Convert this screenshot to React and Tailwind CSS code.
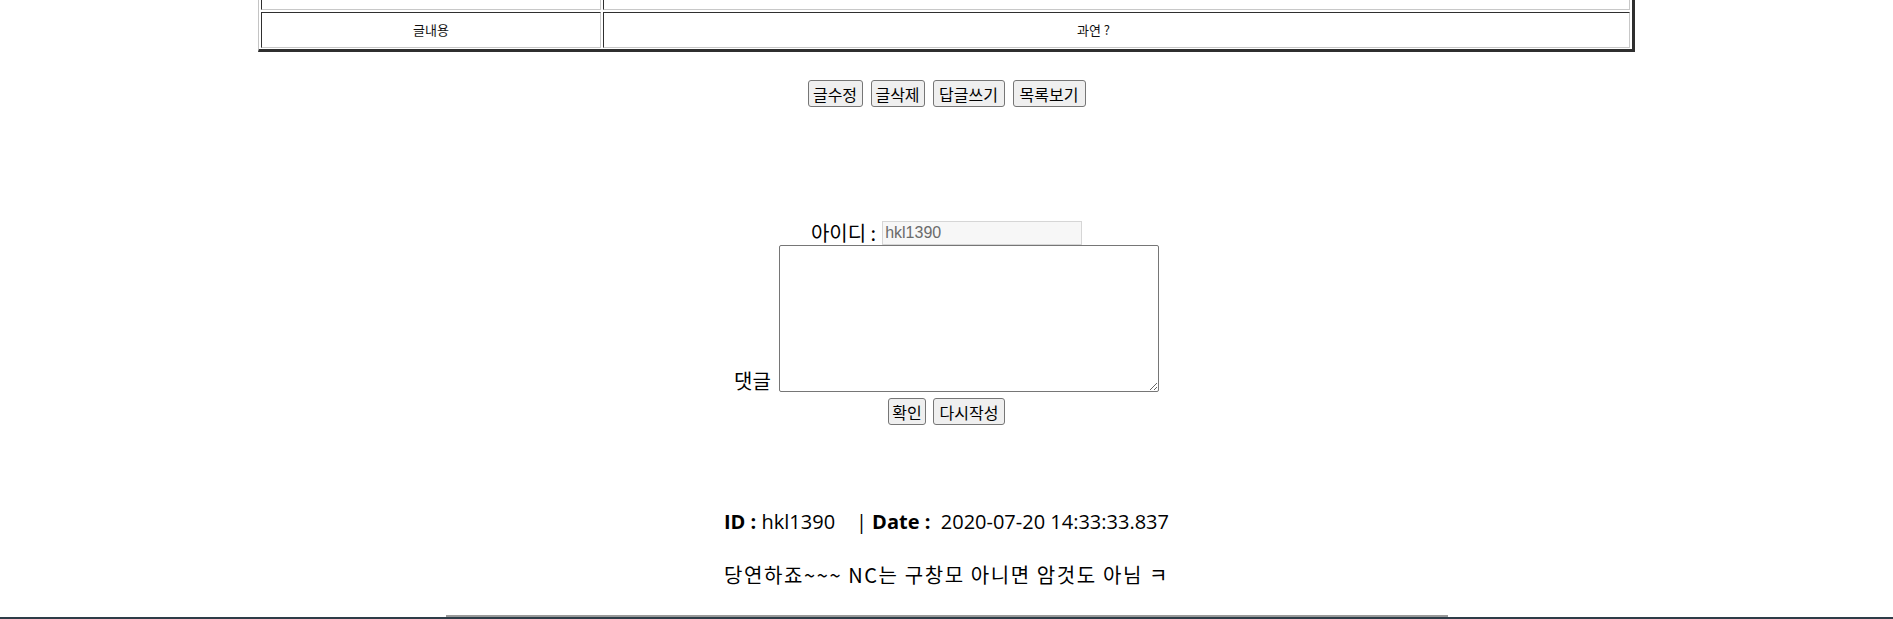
import React from "react";

const kr = { fontFamily: '"Noto Sans CJK KR", "Noto Sans", sans-serif' };

function Btn({ children, w }) {
  return (
    <button
      type="button"
      className={`h-[27px] ${w} border border-[#767676] rounded-[3px] bg-[#efefef] text-[16px] leading-none text-black px-[2px]`}
      style={kr}
    >
      {children}
    </button>
  );
}

function App() {
  return (
    <div className="bg-white w-[1893px] h-[619px] overflow-hidden flex flex-col" style={kr}>
      {/* board table, top rows scrolled out of view */}
      <div className="mx-auto -mt-[32px] w-[1377px] border-l border-l-[#c4c4c4] border-r-[3px] border-r-[#2f2f2f] border-b-[3px] border-b-[#2f2f2f] pt-[2px] pl-[2px] pr-[2px] pb-[1px] flex flex-col gap-[2px]">
        <div className="flex gap-[2px]">
          <div className="w-[340px] h-[40px] border border-t-[#2f2f2f] border-l-[#2f2f2f] border-b-[#c8c8c8] border-r-[#c8c8c8]" />
          <div className="flex-1 h-[40px] border border-t-[#2f2f2f] border-l-[#2f2f2f] border-b-[#c8c8c8] border-r-[#c8c8c8]" />
        </div>
        <div className="flex gap-[2px] text-[13px] text-[#111]">
          <div className="w-[340px] h-[36px] flex items-center justify-center border border-t-[#2f2f2f] border-l-[#2f2f2f] border-b-[#c8c8c8] border-r-[#c8c8c8]">
            글내용
          </div>
          <div className="flex-1 h-[36px] flex items-center justify-center pr-[46px] border border-t-[#2f2f2f] border-l-[#2f2f2f] border-b-[#c8c8c8] border-r-[#c8c8c8]">
            과연 ?
          </div>
        </div>
      </div>

      {/* post actions */}
      <div className="mt-[28px] flex justify-center gap-[8px]">
        <Btn w="w-[55px]">글수정</Btn>
        <Btn w="w-[54px]">글삭제</Btn>
        <Btn w="w-[72px]">답글쓰기</Btn>
        <Btn w="w-[73px]">목록보기</Btn>
      </div>

      {/* comment form */}
      <div className="mt-[114px] flex flex-col items-center">
        <div className="flex items-center gap-[6px] h-[24px]">
          <span className="text-[20px] leading-none text-black">아이디 :</span>
          <input
            readOnly
            value="hkl1390"
            className="w-[200px] h-[24px] bg-[#f7f7f7] border border-[#d6d6d6] px-[2px] text-[16px] text-[#6b6b6b] outline-none"
            style={{ fontFamily: '"Liberation Sans", Arial, sans-serif' }}
          />
        </div>
        <div className="flex items-end gap-[8px]">
          <span className="text-[20px] leading-none text-black mb-[1px]">댓글</span>
          <textarea className="w-[380px] h-[147px] border border-[#767676] rounded-[2px] resize-y" />
        </div>
        <div className="mt-[6px] flex gap-[7px]">
          <Btn w="w-[38px]">확인</Btn>
          <Btn w="w-[72px]">다시작성</Btn>
        </div>
      </div>

      {/* comment list */}
      <div
        className="mt-[82px] flex justify-center text-[20px] text-black whitespace-pre"
        style={{ fontFamily: '"Open Sans", "Noto Sans CJK KR", sans-serif' }}
      >
        <b>ID : </b>
        <span>hkl1390    </span>
        <span>| </span>
        <b>Date : </b>
        <span> 2020-07-20 14:33:33.837</span>
      </div>
      <div className="mt-[23px] flex justify-center text-[20px] tracking-[1.6px] text-black">
        당연하죠~~~ NC는 구창모 아니면 암것도 아님 ㅋ
      </div>

      <div className="mt-auto w-[1002px] mx-auto border-t-2 border-[#9a9a9a] h-[1px]" />
      <div className="h-[2px] bg-[#2e3d48]" />
    </div>
  );
}

export default App;
